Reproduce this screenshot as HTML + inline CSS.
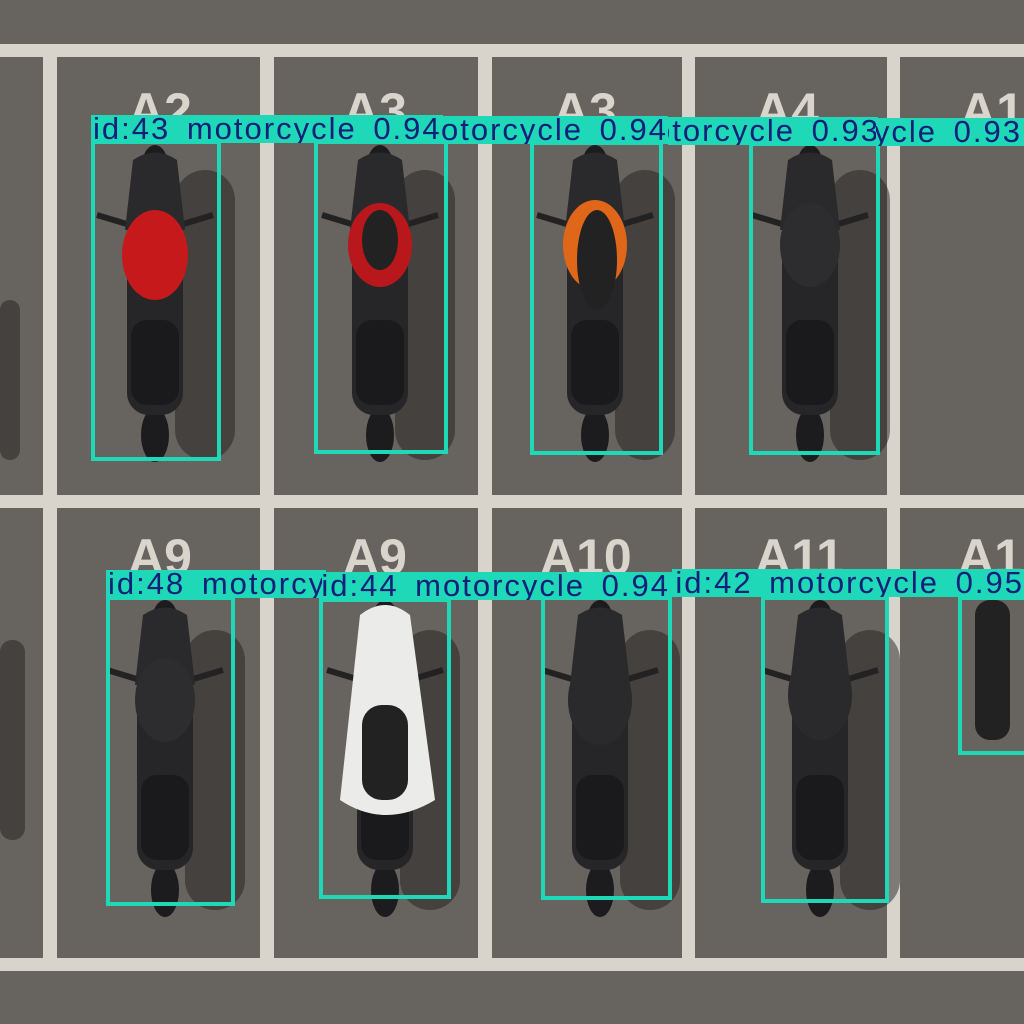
<!DOCTYPE html>
<html><head><meta charset="utf-8"><style>
body{margin:0;width:1024px;height:1024px;overflow:hidden;background:#67635f;position:relative;font-family:"Liberation Sans",sans-serif}
.l{position:absolute;background:#d8d4cc}
.pl{position:absolute;color:#d9d5cd;font-size:50px;font-weight:bold;line-height:1}
.box{position:absolute;border:4px solid #1fd8b7;box-sizing:border-box}
.lab{position:absolute;height:28px;background:#1fd8b7;overflow:hidden}
.lab span{position:absolute;top:-4px;white-space:nowrap;font-size:31px;letter-spacing:2px;word-spacing:6px;color:#12207a;line-height:36px}
</style></head><body>
<div class="l" style="left:0;top:44px;width:1024px;height:13px"></div>
<div class="l" style="left:0;top:495px;width:1024px;height:13px"></div>
<div class="l" style="left:0;top:958px;width:1024px;height:13px"></div>
<div class="l" style="left:43px;top:57px;width:14px;height:901px"></div>
<div class="l" style="left:260px;top:57px;width:14px;height:901px"></div>
<div class="l" style="left:478px;top:57px;width:14px;height:901px"></div>
<div class="l" style="left:682px;top:57px;width:13px;height:901px"></div>
<div class="l" style="left:887px;top:57px;width:13px;height:901px"></div>
<div class="pl" style="left:128px;top:86px">A2</div>
<div class="pl" style="left:343px;top:86px">A3</div>
<div class="pl" style="left:553px;top:86px">A3</div>
<div class="pl" style="left:755px;top:86px">A4</div>
<div class="pl" style="left:960px;top:86px">A1</div>
<div class="pl" style="left:128px;top:532px">A9</div>
<div class="pl" style="left:343px;top:532px">A9</div>
<div class="pl" style="left:540px;top:532px">A10</div>
<div class="pl" style="left:755px;top:532px">A11</div>
<div class="pl" style="left:958px;top:532px">A1</div>

<svg width="1024" height="1024" style="position:absolute;left:0;top:0">
<defs>
<g id="bike">
 <ellipse cx="0" cy="0" rx="14" ry="25" fill="#1c1c1e"/>
 <ellipse cx="0" cy="265" rx="14" ry="27" fill="#1c1c1e"/>
 <path d="M-58 45 L-25 55 L25 55 L58 45" stroke="#222" stroke-width="6" fill="none"/>
 <path d="M-22 -10 Q0 -25 22 -10 L30 60 L-30 60 Z" fill="#2a2a2c"/>
 <rect x="-28" y="55" width="56" height="190" rx="22" fill="#262628"/>
 <rect x="-24" y="150" width="48" height="85" rx="16" fill="#1a1a1c"/>
</g>
</defs>
<g fill="rgba(35,32,32,.5)">
<rect x="175" y="170" width="60" height="290" rx="30"/>
<rect x="395" y="170" width="60" height="290" rx="30"/>
<rect x="615" y="170" width="60" height="290" rx="30"/>
<rect x="830" y="170" width="60" height="290" rx="30"/>
<rect x="185" y="630" width="60" height="280" rx="30"/>
<rect x="400" y="630" width="60" height="280" rx="30"/>
<rect x="620" y="630" width="60" height="280" rx="30"/>
<rect x="840" y="630" width="60" height="280" rx="30"/>
<rect x="0" y="300" width="20" height="160" rx="10"/>
<rect x="0" y="640" width="25" height="200" rx="12"/>
</g>
<use href="#bike" x="155" y="170"/>
<ellipse cx="155" cy="255" rx="33" ry="45" fill="#c5191c"/>
<use href="#bike" x="380" y="170"/>
<ellipse cx="380" cy="245" rx="32" ry="42" fill="#b8181b"/>
<ellipse cx="380" cy="240" rx="18" ry="30" fill="#222"/>
<use href="#bike" x="595" y="170"/>
<ellipse cx="595" cy="245" rx="32" ry="45" fill="#e0661a"/>
<ellipse cx="597" cy="260" rx="20" ry="50" fill="#222"/>
<use href="#bike" x="810" y="170"/>
<ellipse cx="810" cy="245" rx="30" ry="42" fill="#2d2d30"/>
<use href="#bike" x="165" y="625"/>
<ellipse cx="165" cy="700" rx="30" ry="42" fill="#2d2d30"/>
<use href="#bike" x="385" y="625"/>
<path d="M360 615 Q385 595 410 615 L435 800 Q385 830 340 800 Z" fill="#ebebea"/>
<rect x="362" y="705" width="46" height="95" rx="20" fill="#222"/>
<use href="#bike" x="600" y="625"/>
<ellipse cx="600" cy="700" rx="32" ry="45" fill="#2a2a2c"/>
<use href="#bike" x="820" y="625"/>
<ellipse cx="820" cy="695" rx="32" ry="45" fill="#2a2a2c"/>
<rect x="975" y="600" width="35" height="140" rx="15" fill="#222"/>
</svg>

<div class="box" style="left:91px;top:140px;width:130px;height:321px"></div>
<div class="box" style="left:314px;top:140px;width:134px;height:314px"></div>
<div class="box" style="left:530px;top:141px;width:133px;height:314px"></div>
<div class="box" style="left:749px;top:142px;width:131px;height:313px"></div>
<div class="box" style="left:106px;top:596px;width:129px;height:310px"></div>
<div class="box" style="left:319px;top:598px;width:132px;height:301px"></div>
<div class="box" style="left:541px;top:596px;width:131px;height:304px"></div>
<div class="box" style="left:761px;top:596px;width:128px;height:307px"></div>
<div class="box" style="left:958px;top:596px;width:70px;height:159px"></div>

<div class="lab" style="left:91px;top:115px;width:352px"><span style="left:2px">id:43 motorcycle 0.94</span></div>
<div class="lab" style="left:440px;top:116px;width:228px"><span style="right:0">id:44 motorcycle 0.94</span></div>
<div class="lab" style="left:668px;top:117px;width:210px"><span style="right:-2px">id:45 motorcycle 0.93</span></div>
<div class="lab" style="left:876px;top:118px;width:148px"><span style="right:2px">id:46 motorcycle 0.93</span></div>
<div class="lab" style="left:106px;top:570px;width:220px"><span style="left:2px">id:48 motorcycle 0.95</span></div>
<div class="lab" style="left:322px;top:572px;width:350px"><span style="right:2px">id:44 motorcycle 0.94</span></div>
<div class="lab" style="left:672px;top:569px;width:352px"><span style="right:0">id:42 motorcycle 0.95</span></div>
</body></html>
